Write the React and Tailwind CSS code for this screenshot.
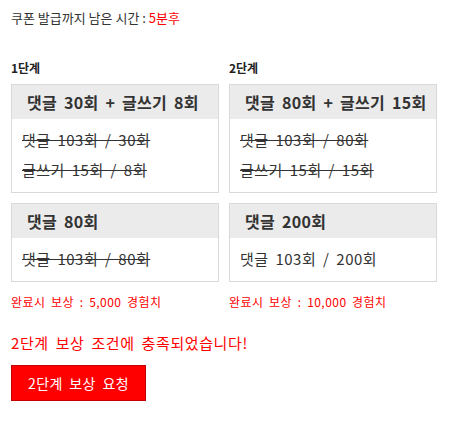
import React from "react";

const steps = [
    {
        label: "1단계",
        missions: [
            {
                title: "댓글 30회 + 글쓰기 8회",
                rows: [
                    { text: "댓글 103회 / 30회", done: true },
                    { text: "글쓰기 15회 / 8회", done: true },
                ],
            },
            {
                title: "댓글 80회",
                rows: [{ text: "댓글 103회 / 80회", done: true }],
            },
        ],
        reward: "완료시 보상 : 5,000 경험치",
    },
    {
        label: "2단계",
        missions: [
            {
                title: "댓글 80회 + 글쓰기 15회",
                rows: [
                    { text: "댓글 103회 / 80회", done: true },
                    { text: "글쓰기 15회 / 15회", done: true },
                ],
            },
            {
                title: "댓글 200회",
                rows: [{ text: "댓글 103회 / 200회", done: false }],
            },
        ],
        reward: "완료시 보상 : 10,000 경험치",
    },
];

function MissionBox({ mission }) {
    return (
        <div className="border border-[#d9d9d9] bg-white">
            <div className="h-[34px] flex items-center pl-[15px] bg-[#ebebeb] text-[16px] font-bold text-[#333] tracking-[0.3px] [word-spacing:3px]">
                {mission.title}
            </div>
            <ul className="pl-[10px] pt-[6px] pb-[7px]">
                {mission.rows.map((row, i) => (
                    <li
                        key={i}
                        className={
                            "h-[30px] leading-[30px] text-[15px] text-[#333] tracking-[0.5px] [word-spacing:3px] " +
                            (row.done ? "line-through" : "")
                        }
                    >
                        {row.text}
                    </li>
                ))}
            </ul>
        </div>
    );
}

export default function App() {
    return (
        <div
            className="w-[451px] min-h-[425px] bg-white px-[11px] pt-[10px]"
            style={{ fontFamily: '"Noto Sans CJK KR", "Noto Sans", sans-serif' }}
        >
            <p className="text-[13px] leading-[16px] text-[#333]">
                쿠폰 발급까지 남은 시간 : <span className="text-[#ff0000]">5분후</span>
            </p>

            <div className="grid grid-cols-2 gap-x-[10px] w-[426px] mt-[34px]">
                {steps.map((step) => (
                    <div key={step.label} className="flex flex-col">
                        <h3 className="text-[12px] leading-[16px] font-bold text-[#222] mb-[8px]">
                            {step.label}
                        </h3>
                        <div className="flex flex-col gap-[10px]">
                            {step.missions.map((m, i) => (
                                <MissionBox key={i} mission={m} />
                            ))}
                        </div>
                        <p className="mt-[12px] text-[12px] leading-[16px] text-[#ff0000] tracking-[0.45px] [word-spacing:2.5px]">
                            {step.reward}
                        </p>
                    </div>
                ))}
            </div>

            <p className="mt-[23px] text-[15px] leading-[20px] text-[#ff0000] tracking-[0.6px] [word-spacing:3px]">
                2단계 보상 조건에 충족되었습니다!
            </p>
            <button className="mt-[12px] w-[135px] h-[36px] bg-[#ff0000] border border-[#c40000] text-white text-[14px] tracking-[0.4px] [word-spacing:3px]">
                2단계 보상 요청
            </button>
        </div>
    );
}
